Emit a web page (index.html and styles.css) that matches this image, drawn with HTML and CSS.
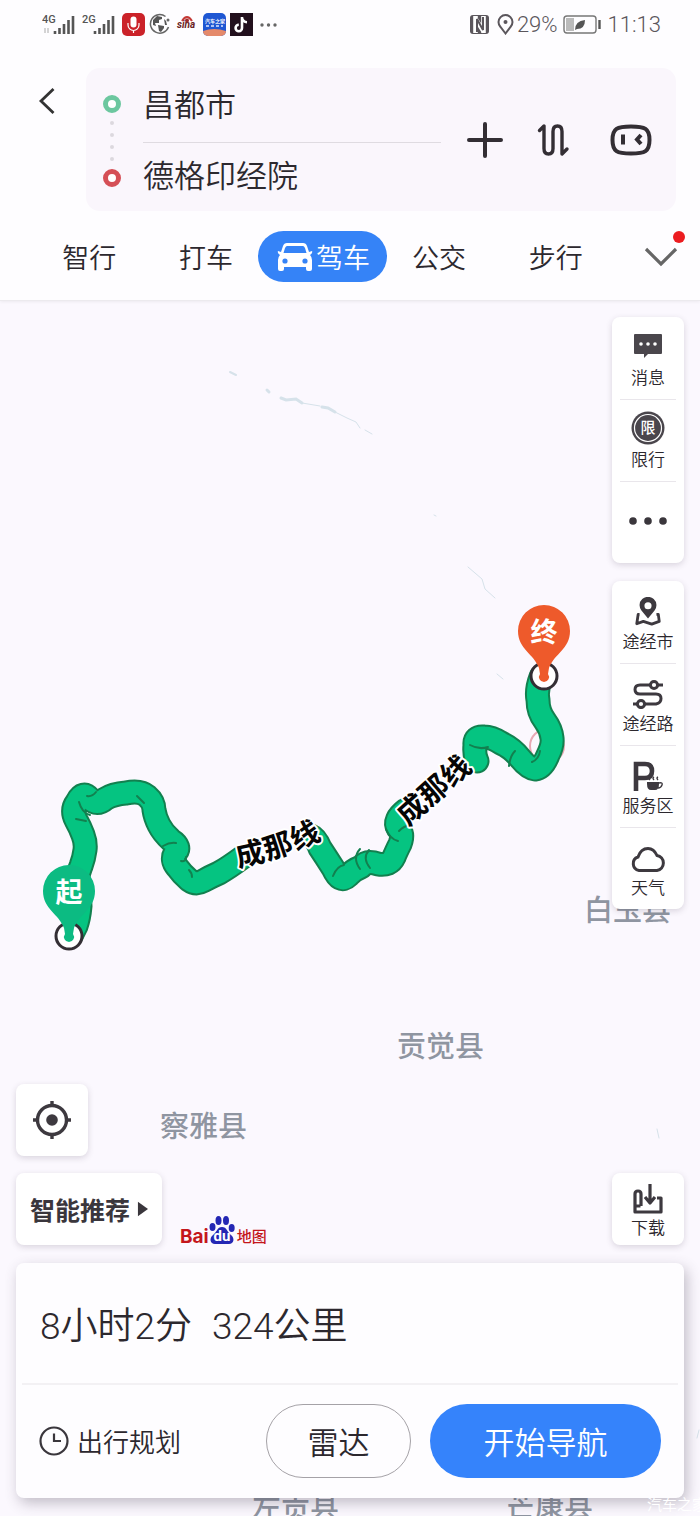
FILE: index.html
```html
<!DOCTYPE html>
<html lang="zh-CN">
<head>
    <meta charset="UTF-8">
    <meta name="viewport" content="width=device-width, initial-scale=1">
    <title>百度地图</title>
    <link rel="stylesheet" href="styles.css">
</head>
<body>
<div class="page">
    <header class="top">
        <div class="status">
            <div class="status-left">
                <svg class="signal" width="34" height="24" viewBox="0 0 34 24">
                    <text x="0" y="11">4G</text>
                    <path d="M3 16v5M6 16v5" stroke="#aaa" stroke-width="1"/>
                    <path d="M13 22v-3M17.500 22v-6M22 22v-10M26.500 22v-14M31 22v-18" stroke="#555" stroke-width="2.600"/>
                </svg>
                <svg class="signal" width="34" height="24" viewBox="0 0 34 24">
                    <text x="0" y="11">2G</text>
                    <path d="M13 22v-3M17.500 22v-6M22 22v-10M26.500 22v-14M31 22v-18" stroke="#555" stroke-width="2.600"/>
                </svg>
                <svg width="23" height="23" viewBox="0 0 23 23">
                    <rect width="23" height="23" rx="5" fill="#cb2229"/>
                    <rect x="8.500" y="3.500" width="6" height="11" rx="3" fill="#fff"/>
                    <path d="M6 10v2a5.500 5.500 0 0 0 11 0v-2M11.500 17v3" fill="none" stroke="#fff" stroke-width="1.200"/>
                </svg>
                <svg width="23" height="23" viewBox="0 0 23 23">
                    <path d="M16.500 3.500A9.300 9.300 0 1 0 19.500 14" fill="none" stroke="#666" stroke-width="1.500"/>
                    <path d="M4 7l4-4 5 1 0 2-3 1 0 3-4 0 1 3-3-1zM9 12l6 1 0 2-3 4-2-1zM15 6l2 2 1 4-2 0z" fill="#555"/>
                    <circle cx="19" cy="7" r="1.500" fill="#666"/>
                </svg>
                <svg width="23" height="23" viewBox="0 0 23 23">
                    <path d="M6 8q5-8 10 0" fill="none" stroke="#c43a36" stroke-width="2"/>
                    <circle cx="11" cy="7.500" r="2" fill="#9c2a2a"/>
                    <text x="1" y="15" class="sina">sina</text>
                </svg>
                <svg width="23" height="23" viewBox="0 0 23 23">
                    <defs><clipPath id="round"><rect width="23" height="23" rx="5"/></clipPath></defs>
                    <g clip-path="url(#round)">
                        <rect width="23" height="23" fill="#1f57d3"/>
                        <path d="M0 18q11-4 23 0v5h-23z" fill="#e58a6b"/>
                    </g>
                    <text x="2" y="10" class="auto">汽车之家</text>
                    <path d="M3 13h3M8 13h3M13 13h3M18 13h2" stroke="#dfe8ff" stroke-width="1.500"/>
                </svg>
                <svg width="23" height="23" viewBox="0 0 23 23">
                    <rect width="23" height="23" fill="#22101d"/>
                    <path d="M12 4v11a3.200 3.200 0 1 1-3.200-3.200M12 5q1 4 5 4.200" fill="none" stroke="#fff" stroke-width="2.600"/>
                </svg>
                <svg width="23" height="23" viewBox="0 0 23 23" fill="#666">
                    <circle cx="5" cy="12" r="1.700"/><circle cx="11.500" cy="12" r="1.700"/><circle cx="18" cy="12" r="1.700"/>
                </svg>
            </div>
            <div class="status-right">
                <svg width="21" height="21" viewBox="0 0 21 21">
                    <rect x="1" y="1" width="19" height="19" rx="3" fill="#5b565c"/>
                    <path d="M6.500 2v17M14.500 2v17M6 4l9 14" fill="none" stroke="#fff" stroke-width="4.600"/>
                    <path d="M8 18V5l6 11V3" fill="none" stroke="#5b565c" stroke-width="2"/>
                </svg>
                <svg class="gps" width="17" height="21" viewBox="0 0 17 21">
                    <path d="M8.500 19.500L3.500 13A7 7 0 1 1 13.500 13z" fill="none" stroke="#5b565c" stroke-width="2"/>
                    <circle cx="8.500" cy="8" r="2" fill="#5b565c"/>
                </svg>
                <span>29%</span>
                <svg class="battery" width="39" height="19" viewBox="0 0 39 19">
                    <rect x="1" y="1" width="32" height="17" rx="3" fill="none" stroke="#777" stroke-width="1.400"/>
                    <rect x="3" y="3" width="8" height="13" fill="#bbb"/>
                    <path d="M12 15q0-9 10-10 0 9-8 9z" fill="#555"/>
                    <path d="M36.500 5v9" stroke="#555" stroke-width="2.400"/>
                </svg>
                <span>11:13</span>
            </div>
        </div>

        <div class="search">
            <button class="back" aria-label="返回">
                <svg width="18" height="28" viewBox="0 0 18 28"><path d="M15.500 2L3 14l12.500 12" fill="none" stroke="#333" stroke-width="2.800"/></svg>
            </button>
            <form class="route-form">
                <div class="markers">
                    <i class="ring green"></i>
                    <i class="dot"></i><i class="dot"></i><i class="dot"></i><i class="dot"></i>
                    <i class="ring red"></i>
                </div>
                <div class="fields">
                    <input type="text" value="昌都市" aria-label="起点">
                    <input type="text" value="德格印经院" aria-label="终点">
                </div>
                <div class="actions">
                    <button type="button" aria-label="添加途经点">
                        <svg width="36" height="36" viewBox="0 0 36 36"><path d="M18 2v32M2 18h32" stroke="#332e34" stroke-width="4" stroke-linecap="round"/></svg>
                    </button>
                    <button type="button" aria-label="交换起终点">
                        <svg width="34" height="36" viewBox="0 0 34 36"><path d="M2.500 8.500L7 4v22.500q0 5.500 4.500 5.500t4.500-5.500v-17Q16 4 20.500 4t4.500 5.500V32l5-5" fill="none" stroke="#332e34" stroke-width="3.400" stroke-linejoin="round" stroke-linecap="round"/></svg>
                    </button>
                    <button type="button" aria-label="语音助手">
                        <svg width="42" height="32" viewBox="0 0 42 32">
                            <path d="M21 2.500c14 0 18.500 2 18.500 13.500S35 29.500 21 29.500 2.500 27.500 2.500 16 7 2.500 21 2.500z" fill="none" stroke="#332e34" stroke-width="4"/>
                            <path d="M13 10.500v10" stroke="#332e34" stroke-width="4"/>
                            <path d="M31 11L27 15.500l4 4.500" fill="none" stroke="#332e34" stroke-width="4"/>
                        </svg>
                    </button>
                </div>
            </form>
        </div>

        <nav class="tabs">
            <div class="tab"><button>智行</button></div>
            <div class="tab"><button>打车</button></div>
            <div class="tab">
                <button class="active">
                    <svg width="36" height="30" viewBox="0 0 36 30">
                        <path fill-rule="evenodd" fill="#fff" d="M10 1h16q3 0 4 3l2 6 3-1q1 2-2 4 2 2 2 5v9q0 2-2 2h-2q-2 0-2-2v-2H7v2q0 2-2 2H3q-2 0-2-2v-9q0-3 2-5-3-2-2-4l3 1 2-6q1-3 4-3zM10 4q-1 0-2 2l-1.500 5h23L28 6q-1-2-2-2z"/>
                        <circle cx="8" cy="19" r="2.600" fill="#3583f7"/><circle cx="28" cy="19" r="2.600" fill="#3583f7"/>
                    </svg>
                    <span>驾车</span>
                </button>
            </div>
            <div class="tab"><button>公交</button></div>
            <div class="tab"><button>步行</button></div>
            <button class="more" aria-label="更多">
                <svg width="34" height="22" viewBox="0 0 34 22"><path d="M2 3l15 15L32 3" fill="none" stroke="#666" stroke-width="3.200"/></svg>
                <i class="badge"></i>
            </button>
        </nav>
    </header>

    <main class="map">
        <svg class="canvas" viewBox="0 301 700 1215" preserveAspectRatio="xMidYMin slice">
            <defs>
                <path id="road-a" d="M236 858Q282 850 318 830"/>
                <path id="road-b" d="M402 820L470 760"/>
                <g id="route">
                    <path d="M72 934L76 926Q79 918 80 906Q80 895 78 885Q77 875 81 866Q84 858 85 850Q86 843 83 835Q80 827 76 820Q71 810 77 802Q83 790 90 799Q97 806 105 799Q113 794 126 793Q140 790 147 796Q154 802 154 810Q155 817 159 825Q163 833 171 840Q182 847 175 853Q171 860 177 867Q182 874 189 880Q196 885 203 881Q210 877 219 873Q228 868 243 857"/>
                    <path d="M311 836Q316 838 320 848Q326 857 333 868Q340 884 348 876Q353 870 361 867Q367 860 378 864Q390 866 394 857Q396 852 400 844Q404 834 398 828Q393 820 406 810"/>
                    <path d="M477 761Q474 755 475 745Q474 736 484 737Q492 737 501 743Q512 748 520 758Q528 768 535 769Q543 768 548 755Q553 745 552 738Q551 729 545 721Q538 712 538 700Q536 690 541 677"/>
                </g>
            </defs>

            <!-- rivers -->
            <g fill="none" stroke="#d6e2ea" stroke-linecap="round">
                <path d="M230 372l6 3" stroke-width="2"/>
                <path d="M267 390l2 2M281 398l5 2 10-1 6 4M322 407l6 1 7 4" stroke-width="3"/>
                <path d="M302 403l18 3M335 412l12 6 9 4 4 6M365 430l7 4" stroke-width="1"/>
                <path d="M434 515l2 1M468 567l14 12 3 10 10 9M497 674l6 5M657 1129l2 9M699 1430l-2 8" stroke-width="1"/>
            </g>

            <g class="county">
                <text x="584" y="921">白玉县</text>
                <text x="397" y="1057">贡觉县</text>
                <text x="160" y="1137">察雅县</text>
                <text x="252" y="1518">左贡县</text>
                <text x="506" y="1517">芒康县</text>
            </g>

            <circle cx="547" cy="746" r="17" fill="none" stroke="#e8a9b4" stroke-width="2"/>
            <use href="#route" class="route-edge"/>
            <use href="#route" class="route-fill"/>
            <g class="route-fold">
                <path d="M79 802q3 11 11 13M87 796q5 1 9-4M76 819l10 2M137 796l7 7M163 846q7-4 13-3M192 877q0-4-3-7M181 861q5 1 5-4"/>
                <path d="M333 876q4-10 11-11M360 849q-8 9 0 20M369 850q-7 8 1 18M386 829q4 10 12 12M399 831q6-6 12-5"/>
                <path d="M470 745q9 5 18 2M509 766q1-10 6-15M532 762q7-3 8-11"/>
            </g>

            <text class="road" dy="9"><textPath href="#road-a">成那线</textPath></text>
            <text class="road" dy="9"><textPath href="#road-b">成那线</textPath></text>

            <g class="pin">
                <circle cx="69" cy="936" r="13"/>
                <path d="M69 942a5 5 0 0 1-4-8l-1-6C59 914 43 909 43 891a26 26 0 0 1 52 0c0 18-16 23-21 37l-1 6a5 5 0 0 1-4 8z" fill="#0cbb82"/>
                <text x="69" y="902">起</text>
            </g>
            <g class="pin">
                <circle cx="544" cy="676" r="13"/>
                <path d="M544 682a5 5 0 0 1-4-8l-1-6C534 654 518 649 518 631a26 26 0 0 1 52 0c0 18-16 23-21 37l-1 6a5 5 0 0 1-4 8z" fill="#ee5a2b"/>
                <text x="544" y="642">终</text>
            </g>
        </svg>

        <div class="overlay">
            <div class="side">
                <div class="panel">
                    <button>
                        <svg width="30" height="30" viewBox="0 0 30 30">
                            <path d="M2 1h26q1 0 1 1v18q0 1-1 1H15l-4 4v-4H2q-1 0-1-1V2q0-1 1-1z" fill="#4a464c"/>
                            <g fill="#fff"><circle cx="8" cy="11" r="1.800"/><circle cx="15" cy="11" r="1.800"/><circle cx="22" cy="11" r="1.800"/></g>
                        </svg>
                        <span>消息</span>
                    </button>
                    <button>
                        <svg width="34" height="34" viewBox="0 0 34 34">
                            <circle cx="17" cy="17" r="16.500" fill="#4a464c"/>
                            <circle cx="17" cy="17" r="13.500" fill="none" stroke="#fff" stroke-width="1.200"/>
                            <text x="17" y="22" class="limit">限</text>
                        </svg>
                        <span>限行</span>
                    </button>
                    <button aria-label="更多">
                        <svg width="38" height="8" viewBox="0 0 38 8" fill="#3a363c"><circle cx="4" cy="4" r="3.800"/><circle cx="19" cy="4" r="3.800"/><circle cx="34" cy="4" r="3.800"/></svg>
                    </button>
                </div>
                <div class="panel">
                    <button>
                        <svg width="30" height="30" viewBox="0 0 30 32">
                            <path fill-rule="evenodd" d="M15 23L8 14.500a9 9 0 1 1 14 0zM15 5.500a3.800 3.800 0 1 0 0 7.600 3.800 3.800 0 0 0 0-7.600z" fill="#3d393f"/>
                            <path d="M6 18.500H4.500L3 28.500l7-2.500 9 3 8-3-1-7.500h-2" fill="none" stroke="#3d393f" stroke-width="3" stroke-linejoin="round"/>
                        </svg>
                        <span>途经市</span>
                    </button>
                    <button>
                        <svg width="32" height="30" viewBox="0 0 32 30" fill="none" stroke="#3d393f" stroke-width="3">
                            <path d="M31 6h-5M18 6H8q-5 0-5 4.500T8 15h16q5 0 5 4.500T24 25H13M5 25H1"/>
                            <circle cx="22" cy="6" r="3.600"/><circle cx="9" cy="25" r="3.600"/>
                        </svg>
                        <span>途经路</span>
                    </button>
                    <button>
                        <svg width="30" height="30" viewBox="0 0 30 30">
                            <path d="M3 30V3h9q7 0 7 7t-7 7H4" fill="none" stroke="#3d393f" stroke-width="4.600"/>
                            <path d="M13 20h14v4q0 6-4 6h-6q-4 0-4-6z" fill="#fff"/>
                            <path d="M14 21h12v2q0 6-4 6h-4q-4 0-4-6z" fill="#3d393f"/>
                            <path d="M26 22q4-1 3 2t-4 3M17 19q-2-2 0-3M21 19q-2-2 0-3M25 19q-2-2 0-3" fill="none" stroke="#3d393f" stroke-width="1.400"/>
                        </svg>
                        <span>服务区</span>
                    </button>
                    <button>
                        <svg width="36" height="27" viewBox="0 0 36 27">
                            <path d="M9 24.500a7 7 0 0 1-1-13.500C10 5 13 2.500 18 2.500S25 5 27 9.500a7.600 7.600 0 0 1 0 15z" fill="none" stroke="#3d393f" stroke-width="3"/>
                        </svg>
                        <span>天气</span>
                    </button>
                </div>
            </div>

            <button class="box locate" aria-label="定位">
                <svg width="40" height="40" viewBox="0 0 40 40">
                    <circle cx="20" cy="20" r="14.500" fill="none" stroke="#3d393f" stroke-width="3.400"/>
                    <circle cx="20" cy="20" r="5.800" fill="#3d393f"/>
                    <path d="M20 1v6M20 33v6M1 20h6M33 20h6" stroke="#3d393f" stroke-width="3.400"/>
                </svg>
            </button>

            <div class="tools">
                <button class="box recommend">
                    <span>智能推荐</span>
                    <svg width="11" height="16" viewBox="0 0 12 16"><path d="M1 0l11 8L1 16z" fill="#3a363c"/></svg>
                </button>
                <div class="logo">
                    <span class="latin">Bai</span>
                    <svg width="26" height="30" viewBox="0 0 26 30">
                        <g fill="#2427b4">
                            <ellipse cx="3.500" cy="12" rx="3" ry="4"/><ellipse cx="9.500" cy="5.500" rx="3" ry="4.500"/>
                            <ellipse cx="17" cy="5.500" rx="3" ry="4.500"/><ellipse cx="22.700" cy="13" rx="3" ry="4"/>
                            <path d="M13 12c5 0 5 5 9 8s3 9-2 9H6c-5 0-6-6-2-9s4-8 9-8z"/>
                        </g>
                        <text x="13" y="26" class="du">du</text>
                    </svg>
                    <span class="hanzi">地图</span>
                </div>
                <button class="box download">
                    <svg width="30" height="30" viewBox="0 0 30 30" fill="none" stroke="#3d393f" stroke-width="3.200" stroke-linejoin="round">
                        <path d="M8 22V10q0-3-3-3t-3 3v18h26V14h-4M2.500 22h5"/>
                        <path d="M17 0v17M12 13l5 6 5-6"/>
                    </svg>
                    <span>下载</span>
                </button>
            </div>

            <section class="card">
                <h1><span>8小时2分</span><span>324公里</span></h1>
                <div class="card-actions">
                    <button class="plan">
                        <svg width="30" height="30" viewBox="0 0 30 30" fill="none" stroke="#3a363c" stroke-width="2.200"><circle cx="15" cy="15" r="13.500"/><path d="M15 7.500V15h7"/></svg>
                        <span>出行规划</span>
                    </button>
                    <button class="radar">雷达</button>
                    <button class="start">开始导航</button>
                </div>
            </section>
        </div>
        <span class="watermark">汽车之家</span>
    </main>
</div>
</body>
</html>
```
FILE: styles.css
```css
* {
    box-sizing: border-box;
}
body {
    margin: 0;
    font-family: Roboto, "Noto Sans CJK SC", sans-serif;
    font-weight: 350;
    color: #2c282e;
    background: #fbf8fe;
}
button {
    padding: 0;
    border: none;
    background: none;
    font: inherit;
    color: inherit;
    white-space: nowrap;
    cursor: pointer;
}
svg {
    display: block;
    flex: none;
}
.page {
    display: flex;
    flex-direction: column;
    min-height: 100vh;
}

/* header */
.top {
    background: #fefdff;
    border-bottom: 1px solid #eceaee;
    box-shadow: 0 1px 3px rgba(0, 0, 0, 0.06);
    position: relative;
    z-index: 1;
}
.status {
    display: flex;
    justify-content: space-between;
    align-items: center;
    height: 48px;
    padding: 0 39px 0 42px;
    font-size: 22px;
    color: #5b565c;
}
.status-left,
.status-right {
    display: flex;
    align-items: center;
}
.status-left {
    gap: 4px;
}
.signal {
    margin-right: 2px;
}
.signal text {
    font-size: 11px;
    font-weight: 500;
    fill: #555;
}
.sina {
    font-size: 10px;
    font-weight: 700;
    font-style: italic;
    fill: #6b2424;
}
.auto {
    font-size: 5px;
    font-weight: 700;
    fill: #fff;
}
.gps {
    margin: 0 3px 0 7px;
}
.battery {
    margin: 0 6px 0 5px;
}
.search {
    display: flex;
    padding: 20px 24px 0 0;
}
.back {
    display: flex;
    justify-content: center;
    width: 86px;
    height: 64px;
    padding: 19px 0 0 8px;
}
.route-form {
    flex: 1;
    display: flex;
    align-items: center;
    height: 143px;
    padding: 4px 24px 0 17px;
    background: #faf6fc;
    border-radius: 14px;
}
.markers {
    display: flex;
    flex-direction: column;
    align-items: center;
    gap: 8px;
    margin-right: 22px;
    padding-bottom: 2px;
}
.ring {
    width: 18px;
    height: 18px;
    border: 5px solid #6cc79f;
    border-radius: 50%;
    background: #fff;
}
.ring.red {
    border-color: #d54f56;
}
.dot {
    width: 4px;
    height: 4px;
    border-radius: 50%;
    background: #dcd8de;
}
.fields {
    flex: 1;
    min-width: 0;
}
.fields input {
    display: block;
    width: 100%;
    height: 70px;
    padding: 0 0 8px;
    border: none;
    outline: none;
    background: none;
    font: inherit;
    font-size: 31px;
    color: inherit;
}
.fields input + input {
    border-top: 1px solid #dfdbe1;
}
.actions {
    display: flex;
    align-items: center;
    gap: 34px;
    margin-left: 26px;
    padding-bottom: 4px;
}
.actions button:last-child {
    margin-left: 5px;
}

/* travel mode tabs */
.tabs {
    display: flex;
    align-items: center;
    height: 89px;
    padding: 2px 0 0 31px;
    font-size: 27px;
}
.tab {
    flex: 1 1 0;
    min-width: 0;
    display: flex;
    justify-content: center;
}
.tab .active {
    display: flex;
    align-items: center;
    gap: 3px;
    height: 51px;
    padding: 0 17px 0 19px;
    border-radius: 26px;
    background: #3583f7;
    color: #fff;
}
.more {
    position: relative;
    width: 86px;
    height: 51px;
    padding-left: 30px;
}
.badge {
    position: absolute;
    right: 15px;
    top: 0;
    width: 12px;
    height: 12px;
    border-radius: 50%;
    background: #ec1c20;
}

/* map */
.map {
    flex: 1;
    display: flex;
    position: relative;
    overflow: hidden;
}
.canvas {
    position: absolute;
    left: 0;
    top: 0;
    width: 100%;
    height: 100%;
}
.county {
    font-size: 29px;
    font-weight: 500;
    fill: #8f95a1;
}
.route-edge,
.route-fill {
    fill: none;
    stroke: #12804f;
    stroke-width: 25px;
    stroke-linecap: round;
    stroke-linejoin: round;
}
.route-fill {
    stroke: #05c481;
    stroke-width: 21px;
}
.route-fold {
    fill: none;
    stroke: #12804f;
    stroke-width: 2px;
    stroke-linecap: round;
}
.road {
    font-size: 29px;
    font-weight: 700;
    fill: #050505;
    stroke: #fff;
    stroke-width: 4px;
    stroke-linejoin: round;
    paint-order: stroke;
}
.pin circle {
    fill: #fff;
    stroke: #332e34;
    stroke-width: 3px;
}
.pin text {
    font-size: 27px;
    font-weight: 700;
    text-anchor: middle;
    fill: #fff;
}
.overlay {
    position: relative;
    flex: 1;
    display: flex;
    flex-direction: column;
    padding: 16px 16px 18px;
}
.side {
    align-self: flex-end;
    display: flex;
    flex-direction: column;
    gap: 18px;
    margin-bottom: auto;
}
.panel {
    width: 72px;
    padding: 0 8px;
    background: #fff;
    border-radius: 8px;
    box-shadow: 0 2px 6px rgba(60, 50, 70, 0.18);
}
.panel button {
    display: flex;
    flex-direction: column;
    align-items: center;
    justify-content: flex-end;
    width: 100%;
    height: 82px;
    padding-bottom: 9px;
    font-size: 17px;
    line-height: 24px;
}
.panel button + button {
    border-top: 1px solid #e9e6eb;
}
.panel svg {
    margin-bottom: 3px;
}
.panel span {
    margin: 0 -8px;
}
.panel button[aria-label] {
    justify-content: center;
    padding: 0;
}
.limit {
    font-size: 15px;
    font-weight: 500;
    text-anchor: middle;
    fill: #fff;
}
.box {
    display: flex;
    align-items: center;
    justify-content: center;
    width: 72px;
    height: 72px;
    background: #fff;
    border-radius: 8px;
    box-shadow: 0 2px 6px rgba(60, 50, 70, 0.18);
}
.locate {
    margin-top: 18px;
}
.tools {
    display: flex;
    margin: 17px 0 18px;
}
.recommend {
    width: 146px;
    gap: 7px;
    font-size: 25px;
    font-weight: 700;
    color: #3a363c;
}
.logo {
    display: flex;
    align-items: flex-end;
    margin: 0 auto 0 18px;
    font-weight: 700;
    line-height: 16px;
    color: #c4161c;
}
.latin {
    font-family: Inter, Roboto, sans-serif;
    font-size: 19px;
}
.hanzi {
    margin-left: 2px;
    font-size: 15px;
    font-weight: 500;
}
.du {
    font-size: 15px;
    text-anchor: middle;
    fill: #fff;
}
.download {
    flex-direction: column;
    padding-top: 6px;
    font-size: 17px;
    line-height: 24px;
}
.download svg {
    margin-bottom: 2px;
}
.card {
    background: #fefdff;
    border-radius: 8px;
    box-shadow: 3px 5px 14px rgba(60, 50, 70, 0.3);
}
.card h1 {
    display: flex;
    align-items: center;
    gap: 20px;
    height: 122px;
    margin: 0 6px;
    padding: 0 18px;
    border-bottom: 2px solid #f3f1f4;
    font-size: 37px;
    font-weight: 350;
}
.card-actions {
    display: flex;
    align-items: center;
    height: 113px;
    padding: 0 23px 2px;
    font-size: 31px;
}
.plan {
    display: flex;
    align-items: center;
    gap: 8px;
    margin-right: auto;
    font-size: 26px;
}
.radar,
.start {
    height: 74px;
    border-radius: 37px;
}
.radar {
    width: 145px;
    margin-right: 19px;
    border: 1px solid #a5a2a7;
}
.start {
    width: 231px;
    background: #3583fb;
    color: #fff;
}
.watermark {
    position: absolute;
    left: calc(100% - 53px);
    bottom: 0;
    font-size: 15px;
    line-height: 22px;
    white-space: nowrap;
    color: #fff;
}
```
